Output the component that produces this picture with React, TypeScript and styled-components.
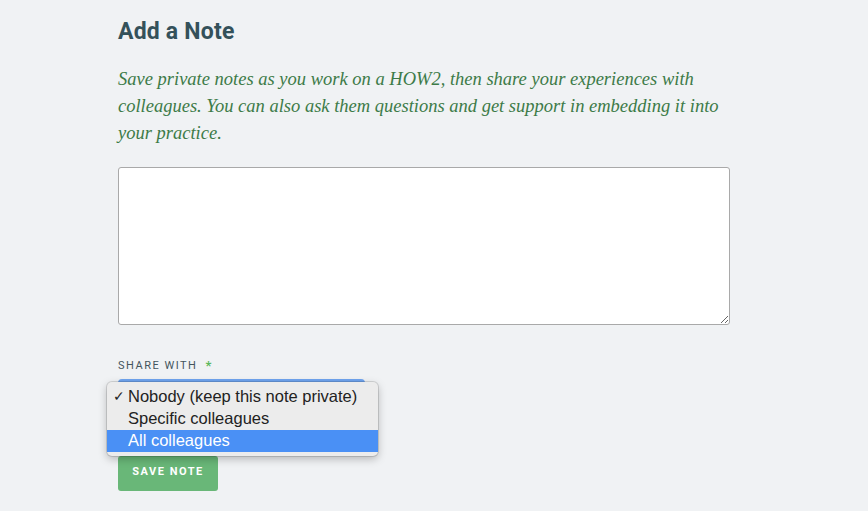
import React from "react";
import styled, { createGlobalStyle } from "styled-components";

const Global = createGlobalStyle`
  html, body { margin: 0; padding: 0; background: #f0f2f4; }
  body { font-family: "Roboto", "Liberation Sans", sans-serif; }
`;

const Page = styled.div`
  width: 868px;
  height: 511px;
  overflow: hidden;
  background: #f0f2f4;
  padding: 17px 0 0 118px;
  box-sizing: border-box;
`;

const Column = styled.div`
  width: 612px;
  display: flex;
  flex-direction: column;
`;

const Title = styled.h2`
  margin: 0;
  font-family: "Roboto", "Liberation Sans", sans-serif;
  font-weight: 700;
  font-size: 23px;
  line-height: 30px;
  color: #34515a;
  letter-spacing: 0.2px;
`;

const Intro = styled.p`
  margin: 19px 0 0;
  font-family: "Liberation Serif", serif;
  font-style: italic;
  font-size: 18.5px;
  line-height: 27px;
  color: #3d7b48;
`;

const NoteArea = styled.textarea`
  margin-top: 20px;
  width: 612px;
  height: 158px;
  box-sizing: border-box;
  border: 1px solid #a9a9a9;
  border-radius: 3px;
  background: #fff;
  resize: vertical;
  outline: none;
`;

const Label = styled.div`
  margin-top: 33px;
  font-family: "Roboto", "Liberation Sans", sans-serif;
  font-size: 11px;
  letter-spacing: 1.5px;
  color: #44555c;
  display: flex;
  gap: 8px;
  align-items: center;
  font-weight: 400;
`;

const Star = styled.span`
  color: #5cb85c;
  font-weight: 700;
  font-size: 13px;
`;

const SelectWrap = styled.div`
  position: relative;
  margin-top: 6px;
  height: 32px;
`;

const SelectBox = styled.div`
  width: 247px;
  height: 32px;
  box-sizing: border-box;
  border-radius: 4px;
  border: 3px solid #6fa4ef;
  background: #fff;
`;

const Menu = styled.ul`
  position: absolute;
  left: -11px;
  top: 3px;
  width: 271px;
  margin: 0;
  padding: 4px 0;
  list-style: none;
  background: #ececec;
  border-radius: 5px;
  box-shadow: 0 0 0 1px rgba(0, 0, 0, 0.12), 0 3px 8px rgba(0, 0, 0, 0.25);
  box-sizing: border-box;
  z-index: 2;
`;

const Option = styled.li<{ $active?: boolean }>`
  position: relative;
  height: 22px;
  line-height: 21px;
  padding-left: 21px;
  font-family: "Liberation Sans", "Roboto", sans-serif;
  font-size: 16.5px;
  color: ${(p) => (p.$active ? "#ffffff" : "#222")};
  background: ${(p) => (p.$active ? "#4a90f5" : "transparent")};
`;

const Check = styled.span`
  position: absolute;
  left: 6px;
  font-size: 14px;
`;

const SaveButton = styled.button`
  margin-top: 45px;
  width: 100px;
  height: 35px;
  border: none;
  border-radius: 3px;
  background: #69b778;
  color: #fff;
  font-family: "Roboto", "Liberation Sans", sans-serif;
  font-weight: 700;
  font-size: 11px;
  letter-spacing: 1.5px;
  align-self: flex-start;
  padding: 0 0 5px;
`;

export default function App() {
  return (
    <Page>
      <Global />
      <Column>
        <Title>Add a Note</Title>
        <Intro>
          Save private notes as you work on a HOW2, then share your experiences with
          colleagues. You can also ask them questions and get support in embedding it into
          your practice.
        </Intro>
        <NoteArea />
        <Label>
          SHARE WITH <Star>*</Star>
        </Label>
        <SelectWrap>
          <SelectBox />
          <Menu>
            <Option>
              <Check>✓</Check>Nobody (keep this note private)
            </Option>
            <Option>Specific colleagues</Option>
            <Option $active>All colleagues</Option>
          </Menu>
        </SelectWrap>
        <SaveButton>SAVE NOTE</SaveButton>
      </Column>
    </Page>
  );
}
